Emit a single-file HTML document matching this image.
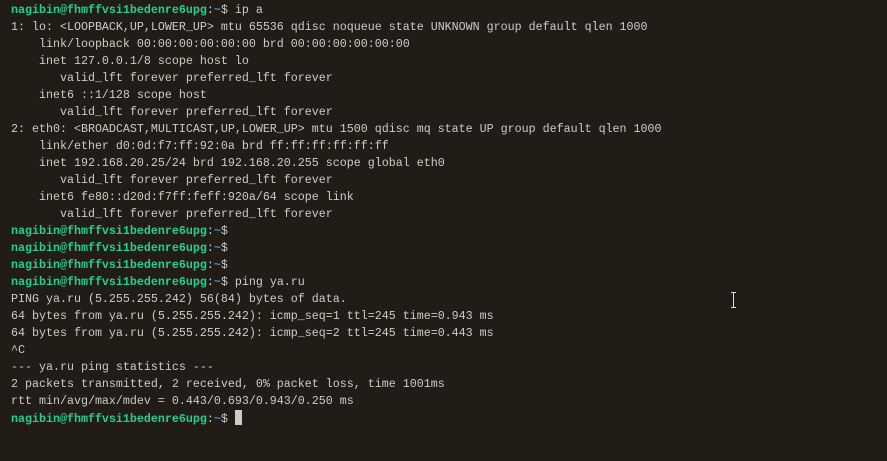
<!DOCTYPE html>
<html><head><meta charset="utf-8"><style>
html,body{margin:0;padding:0;background:#211c15;width:887px;height:461px;overflow:hidden}
pre{margin:0;position:absolute;left:11px;top:2px;font-family:"Liberation Mono",monospace;font-size:11.67px;line-height:17px;color:#cccccc;white-space:pre}
.g{color:#23d18b;font-weight:bold}.b{color:#3b8eea;font-weight:bold}
.cur{display:inline-block;width:7px;height:15px;background:#cccccc;vertical-align:-3px}
.ib{position:absolute;left:731px;top:292px;width:5px;height:16px}
.ib:before{content:"";position:absolute;left:2px;top:0;width:1px;height:16px;background:#ddd}
.ib:after{content:"";position:absolute;left:0;top:0;width:5px;height:16px;border-top:1px solid #ddd;border-bottom:1px solid #ddd;box-sizing:border-box}
</style></head><body>
<pre><span class="g">nagibin@fhmffvsi1bedenre6upg</span>:<span class="b">~</span>$ ip a
1: lo: &lt;LOOPBACK,UP,LOWER_UP&gt; mtu 65536 qdisc noqueue state UNKNOWN group default qlen 1000
    link/loopback 00:00:00:00:00:00 brd 00:00:00:00:00:00
    inet 127.0.0.1/8 scope host lo
       valid_lft forever preferred_lft forever
    inet6 ::1/128 scope host
       valid_lft forever preferred_lft forever
2: eth0: &lt;BROADCAST,MULTICAST,UP,LOWER_UP&gt; mtu 1500 qdisc mq state UP group default qlen 1000
    link/ether d0:0d:f7:ff:92:0a brd ff:ff:ff:ff:ff:ff
    inet 192.168.20.25/24 brd 192.168.20.255 scope global eth0
       valid_lft forever preferred_lft forever
    inet6 fe80::d20d:f7ff:feff:920a/64 scope link
       valid_lft forever preferred_lft forever
<span class="g">nagibin@fhmffvsi1bedenre6upg</span>:<span class="b">~</span>$
<span class="g">nagibin@fhmffvsi1bedenre6upg</span>:<span class="b">~</span>$
<span class="g">nagibin@fhmffvsi1bedenre6upg</span>:<span class="b">~</span>$
<span class="g">nagibin@fhmffvsi1bedenre6upg</span>:<span class="b">~</span>$ ping ya.ru
PING ya.ru (5.255.255.242) 56(84) bytes of data.
64 bytes from ya.ru (5.255.255.242): icmp_seq=1 ttl=245 time=0.943 ms
64 bytes from ya.ru (5.255.255.242): icmp_seq=2 ttl=245 time=0.443 ms
^C
--- ya.ru ping statistics ---
2 packets transmitted, 2 received, 0% packet loss, time 1001ms
rtt min/avg/max/mdev = 0.443/0.693/0.943/0.250 ms
<span class="g">nagibin@fhmffvsi1bedenre6upg</span>:<span class="b">~</span>$ <span class="cur"></span></pre>
<div class="ib"></div>
</body></html>
